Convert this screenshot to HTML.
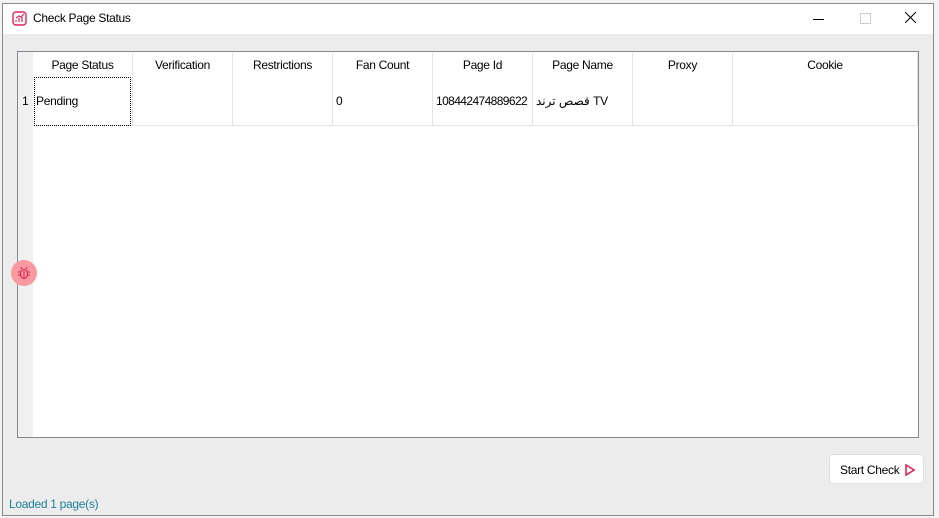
<!DOCTYPE html><html><head><style>
body{margin:0;width:939px;height:518px;background:#f3f3f3;position:relative;overflow:hidden;font-family:"Segoe UI","Liberation Sans","Noto Sans CJK SC",sans-serif;font-size:12px;color:#000;letter-spacing:-0.3px}
.win{position:absolute;left:2px;top:3px;width:930px;height:511px;background:#ececec;border:1px solid #8a8a8a}
.title{position:absolute;left:0;top:0;width:930px;height:30px;background:#fff}
.tbl{position:absolute;left:14px;top:47px;width:900px;height:385px;background:#fff;border:1px solid #828790}
.rh{position:absolute;left:0;top:0;width:15px;height:385px;background:#f0f0f0}
.h{position:absolute;top:1px;height:25px;line-height:25px;text-align:center;border-right:1px solid #e3e3e3}
.c{position:absolute;top:25px;height:49px;line-height:49px;border-right:1px solid #e3e3e3;border-bottom:1px solid #e3e3e3;padding-left:3px;box-sizing:border-box;white-space:nowrap}
</style></head><body>
<div class="win">
<div class="title">
<svg style="position:absolute;left:9px;top:7px" width="15" height="15" viewBox="0 0 15 15"><rect x="1" y="1" width="13" height="13" rx="3" fill="none" stroke="#e0245e" stroke-width="1.4"/><path d="M4 11V9M7 11V7M10 11V6M4 7l3-2 2 1 3-3" stroke="#e0245e" stroke-width="1.2" fill="none"/></svg>
<span style="position:absolute;left:30px;top:7px;font-size:12px">Check Page Status</span>
<div style="position:absolute;left:810px;top:15px;width:11px;height:1px;background:#000"></div>
<div style="position:absolute;left:857px;top:9px;width:9px;height:9px;border:1px solid #ccc"></div>
<svg style="position:absolute;left:902px;top:8px" width="11" height="11"><path d="M0 0L11 11M11 0L0 11" stroke="#000" stroke-width="1"/></svg>
</div>
<div class="tbl">
<div class="rh"></div>
<div style="position:absolute;left:15px;top:0;width:885px;height:25px;background:#fff"></div>
<div class="h" style="left:15px;width:99px">Page Status</div>
<div class="h" style="left:115px;width:99px">Verification</div>
<div class="h" style="left:215px;width:99px">Restrictions</div>
<div class="h" style="left:315px;width:99px">Fan Count</div>
<div class="h" style="left:415px;width:99px">Page Id</div>
<div class="h" style="left:515px;width:99px">Page Name</div>
<div class="h" style="left:615px;width:99px">Proxy</div>
<div class="h" style="left:715px;width:184px">Cookie</div>
<div style="position:absolute;left:4px;top:25px;line-height:49px">1</div>
<div class="c" style="left:15px;width:100px;padding-left:3px"><div style="position:absolute;left:1px;top:0;width:97px;height:49px;border:1px dotted #000;box-sizing:border-box"></div>Pending</div>
<div class="c" style="left:115px;width:100px"></div>
<div class="c" style="left:215px;width:100px"></div>
<div class="c" style="left:315px;width:100px">0</div>
<div class="c" style="left:415px;width:100px;letter-spacing:-0.6px">108442474889622</div>
<div class="c" style="left:515px;width:100px">قصص ترند TV</div>
<div class="c" style="left:615px;width:100px"></div>
<div class="c" style="left:715px;width:185px"></div>
</div>
<div style="position:absolute;left:8px;top:256px;width:26px;height:26px;border-radius:50%;background:#f89a9f"></div>
<svg style="position:absolute;left:14px;top:262px" width="14" height="14" viewBox="0 0 14 14" fill="none" stroke="#d81b4f" stroke-width="1"><ellipse cx="7" cy="8" rx="3.5" ry="4.5"/><path d="M5 3l-1-2M9 3l1-2M3.5 6H1M3.5 9H1M10.5 6H13M10.5 9H13M7 5v7"/></svg>
<div style="position:absolute;left:826px;top:450px;width:95px;height:30px;background:#fff;border:1px solid #e0e0e0;border-radius:4px;box-sizing:border-box"><span style="position:absolute;left:10px;top:8px">Start Check</span><svg style="position:absolute;left:75px;top:9px" width="10" height="12"><path d="M1 1L9 6L1 11Z" fill="none" stroke="#e0245e" stroke-width="1.6"/></svg></div>
<div style="position:absolute;left:6px;top:493px;color:#1a7f9a">Loaded 1 page(s)</div>
</div>
</body></html>
